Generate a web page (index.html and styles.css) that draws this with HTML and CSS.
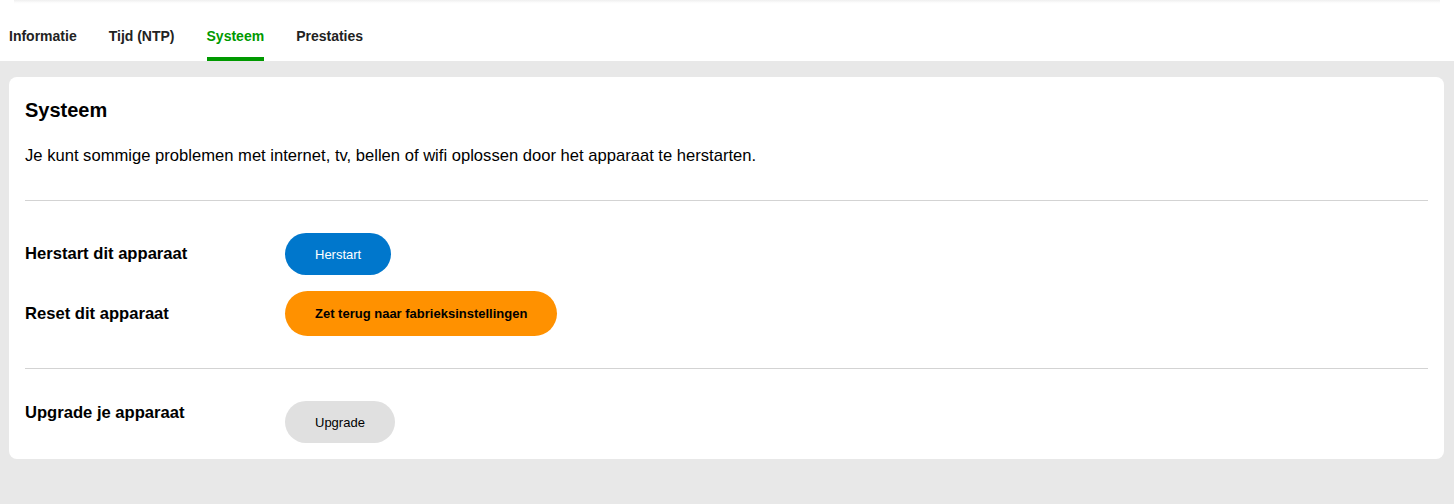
FILE: index.html
```html
<!DOCTYPE html>
<html lang="nl">
<head>
<meta charset="utf-8">
<title>Systeem</title>
<link rel="stylesheet" href="styles.css">
</head>
<body>
<header class="header">
  <div class="header-shadow"></div>
  <nav class="tabs">
    <a class="tab">Informatie</a>
    <a class="tab">Tijd (NTP)</a>
    <a class="tab tab-active">Systeem</a>
    <a class="tab">Prestaties</a>
  </nav>
</header>
<main class="main">
  <section class="card">
    <h2 class="card-title">Systeem</h2>
    <p class="card-text">Je kunt sommige problemen met internet, tv, bellen of wifi oplossen door het apparaat te herstarten.</p>
    <hr class="divider">
    <div class="rows">
      <div class="row">
        <span class="row-label">Herstart dit apparaat</span>
        <button class="btn btn-blue">Herstart</button>
      </div>
      <div class="row">
        <span class="row-label">Reset dit apparaat</span>
        <button class="btn btn-orange">Zet terug naar fabrieksinstellingen</button>
      </div>
    </div>
    <hr class="divider">
    <div class="rows">
      <div class="row row-top">
        <span class="row-label">Upgrade je apparaat</span>
        <button class="btn btn-grey">Upgrade</button>
      </div>
    </div>
  </section>
</main>
</body>
</html>
```
FILE: styles.css
```css
html {
  background: #e8e8e8;
}
body {
  margin: 0;
  font-family: "Liberation Sans", Arial, sans-serif;
  color: #000;
}
.header {
  background: #fff;
}
.header-shadow {
  height: 4px;
  margin: 0 14px;
  background: linear-gradient(#efefef, #fbfbfb 60%, #fff);
}
.tabs {
  display: flex;
  gap: 32px;
  padding-left: 9px;
}
.tab {
  font-size: 14px;
  font-weight: bold;
  line-height: 16px;
  color: #222;
  padding: 24px 0 13px;
  border-bottom: 4px solid transparent;
}
.tab-active {
  color: #009900;
  border-bottom-color: #009900;
}
.main {
  padding: 16px 10px 45px 9px;
}
.card {
  background: #fff;
  border-radius: 8px;
  padding: 16px;
}
.card-title {
  margin: 5px 0 0;
  font-size: 20px;
  line-height: 24px;
  font-weight: bold;
}
.card-text {
  margin: 22px 0 0;
  font-size: 16.6px;
  line-height: 24px;
}
.divider {
  border: 0;
  border-top: 1px solid #d3d3d3;
  margin: 32px 0 32px;
  height: 0;
}
.rows {
  display: flex;
  flex-direction: column;
  gap: 16px;
}
.row {
  display: flex;
  align-items: center;
}
.row-top {
  align-items: flex-start;
}
.row-top .row-label {
  margin-top: 2px;
}
.row-label {
  width: 260px;
  font-size: 16.6px;
  line-height: 20px;
  font-weight: bold;
}
.btn {
  border: 0;
  font-family: "Liberation Sans", Arial, sans-serif;
  font-size: 13px;
  height: 42px;
  padding: 0 30px;
  border-radius: 22px;
  cursor: pointer;
}
.btn-blue {
  background: #0077cc;
  color: #fff;
}
.btn-orange {
  background: #ff9100;
  color: #000;
  font-weight: bold;
  height: 45px;
  border-radius: 23px;
}
.btn-grey {
  background: #e0e0e0;
  color: #000;
}
```
